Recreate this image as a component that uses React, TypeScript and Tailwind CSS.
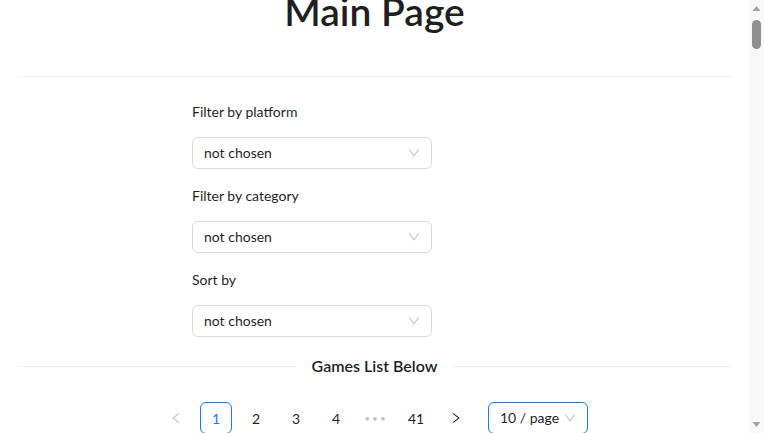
import React, { useLayoutEffect, useRef } from 'react';

const filters = ['Filter by platform', 'Filter by category', 'Sort by'];

const games = [
  'Overwatch 2',
  'Diablo Immortal',
  'Lost Ark',
  'Fall Guys',
  'Apex Legends',
  'Genshin Impact',
  'Valorant',
  'Dauntless',
  'Warframe',
  'Path of Exile',
];

function DownIcon({ className }: { className?: string }) {
  return (
    <svg viewBox="64 64 896 896" width="12" height="12" className={className} fill="currentColor">
      <path d="M884 256h-75c-5.1 0-9.9 2.5-12.9 6.6L512 654.2 227.9 262.6c-3-4.1-7.8-6.6-12.9-6.6h-75c-6.5 0-10.3 7.4-6.5 12.7l352.6 486.1c12.8 17.6 39 17.6 51.7 0l352.6-486.1c3.9-5.3.1-12.7-6.4-12.7z" />
    </svg>
  );
}

function LeftIcon() {
  return (
    <svg viewBox="64 64 896 896" width="12" height="12" fill="currentColor">
      <path d="M724 218.3V141c0-6.7-7.7-10.4-12.9-6.3L260.3 486.8a31.86 31.86 0 000 50.3l450.8 352.1c5.3 4.1 12.9.4 12.9-6.3v-77.3c0-4.9-2.3-9.6-6.1-12.6l-360-281 360-281.1c3.8-3 6.1-7.7 6.1-12.6z" />
    </svg>
  );
}

function RightIcon() {
  return (
    <svg viewBox="64 64 896 896" width="12" height="12" fill="currentColor">
      <path d="M765.7 486.8L314.9 134.7A7.97 7.97 0 00302 141v77.3c0 4.9 2.3 9.6 6.1 12.6l360 281.1-360 281.1c-3.9 3-6.1 7.7-6.1 12.6V883c0 6.7 7.7 10.4 12.9 6.3l450.8-352.1a31.96 31.96 0 000-50.4z" />
    </svg>
  );
}

function Select({ value }: { value: string }) {
  return (
    <div className="flex items-center justify-between w-[240px] h-[32px] px-[11px] rounded-[6px] border border-[#d9d9d9] bg-white">
      <span className="text-[14px] leading-[22px] text-[#1f1f1f]">{value}</span>
      <DownIcon className="text-[#bfbfbf]" />
    </div>
  );
}

// the page's own scrollbar, drawn (the headless browser hides the real one)
function ScrollBar() {
  return (
    <div className="w-[15px] h-full flex flex-col items-center bg-[#f8f8f8]">
      <svg width="15" height="15" viewBox="0 0 15 15">
        <polygon points="3.5,11 7.5,6 11.5,11" fill="#a3a3a3" />
      </svg>
      <div className="mt-[5px] w-[9px] h-[29px] rounded-full bg-[#8f8f8f]" />
      <div className="flex-1" />
      <svg width="15" height="15" viewBox="0 0 15 15">
        <polygon points="3.5,4 7.5,9 11.5,4" fill="#a3a3a3" />
      </svg>
    </div>
  );
}

export default function App() {
  const pageRef = useRef<HTMLDivElement>(null);

  useLayoutEffect(() => {
    if (pageRef.current) pageRef.current.scrollTop = 60;
  }, []);

  return (
    <div className="h-screen flex bg-white text-[#1f1f1f]" style={{ fontFamily: 'Lato, "Noto Sans", sans-serif' }}>
      <div ref={pageRef} className="flex-1 overflow-hidden">
        <div className="px-[18px] pt-[48px] pb-10">
          <h1 className="text-center text-[39px] leading-[46px] font-semibold">Main Page</h1>

          <div className="mt-[42px] h-px bg-[#f0f0f0]" />

          <div className="mt-[24px] ml-[174px] w-[240px] flex flex-col gap-4">
            {filters.map((label) => (
              <div key={label}>
                <div className="text-[14px] leading-[22px] mb-[14px]">{label}</div>
                <Select value="not chosen" />
              </div>
            ))}
          </div>

          <div className="mt-[17px] flex items-center">
            <div className="flex-1 h-px bg-[#f0f0f0]" />
            <span className="px-4 text-[16px] leading-[24px] font-semibold">Games List Below</span>
            <div className="flex-1 h-px bg-[#f0f0f0]" />
          </div>

          <div className="mt-[24px] pr-px flex items-center justify-center gap-2 text-[14px]">
            <div className="w-[32px] h-[32px] flex items-center justify-center text-[#bfbfbf]">
              <LeftIcon />
            </div>
            <div className="w-[32px] h-[32px] flex items-center justify-center rounded-[6px] border border-[#1677ff] text-[#1677ff]">1</div>
            {['2', '3', '4'].map((n) => (
              <div key={n} className="w-[32px] h-[32px] flex items-center justify-center rounded-[6px]">
                {n}
              </div>
            ))}
            <div className="w-[32px] h-[32px] flex items-center justify-center text-[10px] tracking-[2px] text-[#bfbfbf]">•••</div>
            <div className="w-[32px] h-[32px] flex items-center justify-center rounded-[6px]">41</div>
            <div className="w-[32px] h-[32px] flex items-center justify-center text-[#1f1f1f]">
              <RightIcon />
            </div>
            <div className="ml-2 flex items-center justify-between w-[100px] h-[32px] px-[11px] rounded-[6px] border border-[#1677ff]">
              <span className="leading-[22px]">10 / page</span>
              <DownIcon className="text-[#bfbfbf]" />
            </div>
          </div>

          <div className="mt-8 mx-auto w-[480px] flex flex-col gap-6">
            {games.map((g) => (
              <div key={g} className="rounded-lg border border-[#f0f0f0] overflow-hidden">
                <div className="h-[420px] bg-[#fafafa]" />
                <div className="p-6">
                  <div className="text-[16px] font-semibold">{g}</div>
                  <div className="mt-2 text-[14px] text-[#8c8c8c]">Free to play</div>
                </div>
              </div>
            ))}
          </div>
        </div>
      </div>
      <ScrollBar />
    </div>
  );
}
